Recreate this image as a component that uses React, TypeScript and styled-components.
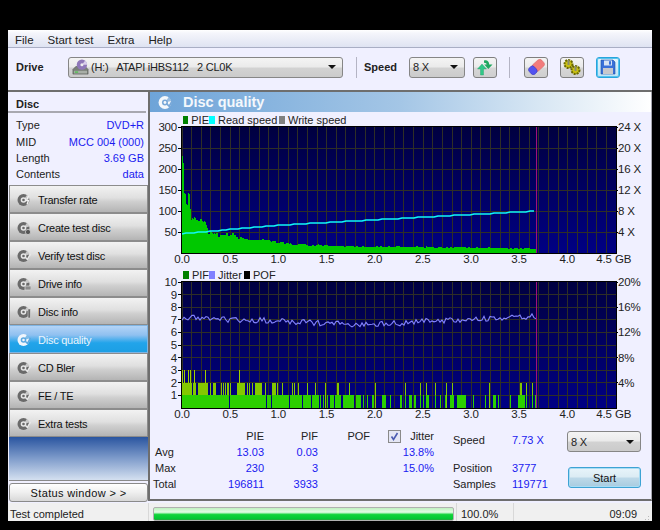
import React from "react";
import styled, { createGlobalStyle } from "styled-components";

const FONT = `"Liberation Sans", Arial, sans-serif`;
const PX_PER_GB = 96.3;
const PLOT_X = 32;
const PLOT_W = 434;
const PLOT_H = 126;
const END_COL = 354;

const GlobalStyle = createGlobalStyle`
  html, body {
    margin: 0;
    background: #000;
    font-family: ${FONT};
    font-size: 11px;
    color: #111;
  }
`;

// small deterministic noise so the charts are the same on every load
function makeRandom(seed: number) {
  let s = seed;
  return () => {
    s = (s * 16807) % 2147483647;
    return s / 2147483647;
  };
}

function interpolate(points: number[][], x: number) {
  for (let i = 1; i < points.length; i++) {
    if (x <= points[i][0]) {
      const [x0, y0] = points[i - 1];
      const [x1, y1] = points[i];
      return y0 + ((y1 - y0) * (x - x0)) / (x1 - x0);
    }
  }
  return points[points.length - 1][1];
}

const pieEnvelope = [
  [0, 230], [0.012, 212], [0.02, 143], [0.05, 135], [0.08, 128], [0.09, 88], [0.14, 75],
  [0.2, 80], [0.25, 65], [0.27, 50], [0.35, 44], [0.45, 44], [0.55, 46], [0.6, 36],
  [0.8, 32], [1.0, 26], [1.2, 21], [1.5, 18], [2.0, 16], [3.0, 13], [3.68, 11],
];
const speedCurve = [[0, 46], [1, 66], [2, 79], [3.68, 100]];
const jitterCurve = [
  [0, 7.2], [0.5, 7.0], [1.0, 6.95], [1.5, 6.7], [1.9, 6.6], [2.28, 6.75],
  [2.5, 6.9], [3.0, 7.0], [3.5, 7.2], [3.68, 7.3],
];

function buildPiePath() {
  const rnd = makeRandom(4242);
  let d = "";
  let factor = 1;
  for (let i = 0; i < END_COL; i++) {
    if (i % 2 === 0) factor = i < 3 ? 1 : 0.84 + rnd() * 0.24;
    const base = interpolate(pieEnvelope, i / PX_PER_GB);
    const h = Math.max(3, Math.round(base * factor * 0.42));
    d += `M${PLOT_X + i + 0.5} ${PLOT_H}V${PLOT_H - h}`;
  }
  return d;
}

function buildSpeedPoints() {
  const pts: string[] = [];
  for (let i = 0; i <= END_COL; i += 4) {
    const v = interpolate(speedCurve, i / PX_PER_GB);
    pts.push(`${PLOT_X + i},${Math.round(PLOT_H - v * 0.42)}`);
  }
  return pts.join(" ");
}

function buildJitterPoints() {
  const rnd = makeRandom(977);
  const pts: string[] = [];
  for (let i = 0; i <= END_COL; i += 2) {
    const v = interpolate(jitterCurve, i / PX_PER_GB) + (rnd() - 0.5) * 0.45;
    pts.push(`${PLOT_X + i},${(PLOT_H - v * 12.6).toFixed(1)}`);
  }
  return pts.join(" ");
}

// PIF columns as pixel spans measured off the trace: [from, to] in page x
const pifOne = [
  [182, 228], [230, 265], [267, 270], [272, 288], [290, 301], [303, 310], [312, 318], [320, 320],
  [323, 323], [327, 327], [330, 333], [335, 340], [343, 353], [356, 360], [363, 363], [367, 367],
  [372, 373], [382, 385], [390, 390], [400, 401], [405, 405], [409, 411], [414, 415], [420, 420],
  [423, 423], [426, 428], [435, 435], [440, 440], [445, 445], [450, 453], [457, 465], [473, 473],
  [485, 485], [493, 495], [498, 498], [510, 510], [518, 524], [526, 526], [532, 532], [535, 535],
];
const pifTwo = [
  [182, 191], [193, 195], [198, 207], [210, 210], [213, 215], [221, 221], [223, 223], [225, 225],
  [227, 228], [230, 230], [237, 244], [247, 247], [249, 249], [252, 252], [255, 261], [265, 265],
  [272, 275], [277, 277], [282, 282], [292, 292], [294, 294], [298, 298], [307, 307], [315, 315],
  [325, 325], [337, 338], [349, 349], [375, 375], [405, 405], [420, 420], [426, 426],
  [435, 435], [446, 446], [452, 452], [489, 489], [520, 521], [526, 526], [532, 532],
];
const pifThree = [182, 184, 188, 190, 194, 205, 239];

function spansToPath(spans: number[][], level: number) {
  return spans
    .map(([a, b]) => {
      const x = a - 150;
      const w = b - a + 1;
      return `M${x} ${PLOT_H}h${w}v${-level * 12.6}h${-w}z`;
    })
    .join("");
}

const piePath = buildPiePath();
const speedPoints = buildSpeedPoints();
const jitterPoints = buildJitterPoints();

const Window = styled.div`
  box-sizing: border-box;
  width: 644px;
  height: 491px;
  margin: 30px 0 0 8px;
  background: #f0f0ff;
  display: flex;
  flex-direction: column;
`;

const MenuBar = styled.div`
  box-sizing: border-box;
  height: 18px;
  flex: none;
  display: flex;
  align-items: center;
  padding: 2px 0 0 7px;
  gap: 14px;
  font-size: 11.5px;
  background: linear-gradient(#ffffff 0, #f4f5fb 20%, #dfe3f2 100%);
  border-bottom: 1px solid #a9aec4;
`;

const MenuItem = styled.span`
  color: #222;
`;

const ToolBar = styled.div`
  box-sizing: border-box;
  height: 44px;
  flex: none;
  display: flex;
  align-items: center;
  padding: 0 0 4px 8px;
  border-bottom: 2px solid #6e6e6e;
`;

const BoldLabel = styled.span<{ $width: number }>`
  font-weight: bold;
  width: ${(p) => p.$width}px;
  color: #222;
`;

const Combo = styled.div<{ $width: number }>`
  box-sizing: border-box;
  width: ${(p) => p.$width}px;
  height: 21px;
  display: flex;
  align-items: center;
  padding: 0 6px 0 3px;
  gap: 2px;
  border: 1px solid #868686;
  border-radius: 3px;
  background: linear-gradient(#f4f4f4 0, #ebebeb 45%, #d2d2d2 55%, #cbcbcb 100%);
  color: #222;
  white-space: pre;
`;

const ComboText = styled.span`
  flex: 1;
  letter-spacing: -0.25px;
`;

const Arrow = styled.span`
  width: 0;
  height: 0;
  border-left: 4px solid transparent;
  border-right: 4px solid transparent;
  border-top: 4px solid #111;
`;

const ToolSep = styled.div<{ $left: number; $right: number }>`
  width: 1px;
  height: 21px;
  background: #b4b4c4;
  margin: 0 ${(p) => p.$right}px 0 ${(p) => p.$left}px;
`;

const ToolButton = styled.button<{ $focus?: boolean; $left?: number; $gap?: number }>`
  box-sizing: border-box;
  width: 24px;
  height: 21px;
  padding: 0;
  margin: 0 ${(p) => p.$gap ?? 0}px 0 ${(p) => p.$left ?? 0}px;
  display: flex;
  align-items: center;
  justify-content: center;
  border: 1px solid ${(p) => (p.$focus ? "#27a4dc" : "#7f7f7f")};
  border-radius: 3px;
  background: ${(p) =>
    p.$focus
      ? "linear-gradient(#e6f5fc, #bfe4f6)"
      : "linear-gradient(#f4f4f4 0, #ebebeb 45%, #d6d6d6 55%, #cfcfcf 100%)"};
  box-shadow: ${(p) => (p.$focus ? "0 0 0 1px #55c4ee inset" : "none")};
`;

const Main = styled.div`
  flex: 1;
  display: flex;
  min-height: 0;
`;

const LeftColumn = styled.div`
  width: 140px;
  flex: none;
  display: flex;
  flex-direction: column;
`;

const DiscHeader = styled.div`
  box-sizing: border-box;
  height: 21px;
  padding: 6px 0 0 8px;
  font-weight: bold;
  color: #222;
  border-bottom: 2px solid #a8a8b0;
  margin-right: 2px;
`;

const DiscInfo = styled.div`
  box-sizing: border-box;
  height: 72px;
  padding: 4px 4px 0 8px;
  display: grid;
  grid-template-columns: auto 1fr;
  grid-auto-rows: 16.4px;
  align-items: center;
`;

const InfoLabel = styled.span`
  color: #222;
`;

const InfoValue = styled.span`
  text-align: right;
  color: #1a1af0;
`;

const NavList = styled.div`
  display: flex;
  flex-direction: column;
  padding-left: 1px;
`;

const NavButton = styled.div<{ $active?: boolean }>`
  box-sizing: border-box;
  height: 28px;
  display: flex;
  align-items: center;
  padding: 1px 0 0 7px;
  gap: 7px;
  letter-spacing: -0.25px;
  border: 1px solid ${(p) => (p.$active ? "#7fb4e2" : "#8c8c8c")};
  color: ${(p) => (p.$active ? "#eaf4fc" : "#111")};
  background: ${(p) =>
    p.$active
      ? "linear-gradient(#b4d4f6 0, #8fc0f0 35%, #22a4ea 65%, #1c9fe4 100%)"
      : "linear-gradient(#f2f2f2 0, #e0e0e0 45%, #cfcfcf 60%, #b4b4b4 100%)"};
`;

const Filler = styled.div`
  flex: 1;
  margin-left: 1px;
  background: linear-gradient(#2a55a0 0, #7f9ccb 50%, #d4e0f0 100%);
  border-bottom: 1px solid #8a8a8a;
`;

const StatusButton = styled.div`
  box-sizing: border-box;
  height: 19px;
  margin: 2px 0 1px 1px;
  display: flex;
  align-items: center;
  justify-content: center;
  border: 1px solid #8a8a8a;
  border-radius: 3px;
  letter-spacing: 0.35px;
  background: linear-gradient(#ffffff 0, #efefef 50%, #d8d8d8 100%);
`;

const Panel = styled.div`
  box-sizing: border-box;
  width: 504px;
  height: 409px;
  flex: none;
  display: flex;
  flex-direction: column;
  border-left: 2px solid #6e6e6e;
  border-right: 1px solid #a8a8b0;
  border-bottom: 2px solid #6e6e6e;
`;

const TitleBar = styled.div`
  height: 20px;
  flex: none;
  display: flex;
  align-items: center;
  padding-left: 8px;
  gap: 10px;
  color: #f4f8fc;
  font-size: 14.5px;
  font-weight: bold;
  background: linear-gradient(90deg, #6ea4d8 0, #a4c6e6 50%, #d8e7f4 78%, #ffffff 100%);
`;

const Legend = styled.div<{ $height: number }>`
  height: ${(p) => p.$height}px;
  flex: none;
  display: flex;
  align-items: center;
  padding: 1px 0 0 33px;
  box-sizing: border-box;
  color: #222;
`;

const LegendItem = styled.span<{ $color: string; $width: number }>`
  display: flex;
  align-items: center;
  width: ${(p) => p.$width}px;
  white-space: nowrap;
  &::before {
    content: "";
    width: 6px;
    height: 8px;
    margin-right: 3px;
    background: ${(p) => p.$color};
  }
`;

const ChartSvg = styled.svg`
  display: block;
  flex: none;
  overflow: visible;
  text {
    font-family: ${FONT};
    font-size: 11.5px;
    letter-spacing: -0.2px;
    fill: #222;
  }
`;

const StatsRow = styled.div`
  flex: 1;
  display: flex;
  padding-top: 6px;
`;

const StatsTable = styled.div`
  display: grid;
  margin-left: 3px;
  grid-template-columns: 40px 71px 54px 52px 64px;
  grid-auto-rows: 16px;
  align-items: center;
  width: 300px;
  flex: none;
`;

const StatHead = styled.span`
  text-align: right;
  color: #222;
`;

const StatLabel = styled.span<{ $indent?: number }>`
  padding-left: ${(p) => p.$indent ?? 2}px;
  color: #222;
`;

const StatValue = styled.span`
  text-align: right;
  color: #1a1af0;
`;

const JitterHead = styled.span`
  display: flex;
  justify-content: space-between;
  align-items: center;
  padding-left: 18px;
  color: #222;
`;

const CheckBox = styled.span`
  box-sizing: border-box;
  width: 13px;
  height: 13px;
  display: flex;
  align-items: center;
  justify-content: center;
  border: 1px solid #8a8a8a;
  background: #e4e6f4;
`;

const ReadoutColumn = styled.div`
  width: 114px;
  flex: none;
  display: grid;
  grid-template-columns: 59px 1fr;
  grid-template-rows: 4px 16px 12px 16px 16px;
  align-items: center;
`;

const Slot = styled.span<{ $row: number; $blue?: boolean }>`
  grid-row: ${(p) => p.$row};
  color: ${(p) => (p.$blue ? "#1a1af0" : "#222")};
  white-space: nowrap;
`;

const ControlColumn = styled.div`
  flex: none;
  width: 74px;
  display: flex;
  flex-direction: column;
  align-items: flex-start;
  gap: 15px;
  padding-top: 3px;
`;

const StartButton = styled.div`
  box-sizing: border-box;
  width: 73px;
  height: 21px;
  margin-left: 1px;
  display: flex;
  align-items: center;
  justify-content: center;
  border: 1px solid #3da3d4;
  border-radius: 3px;
  box-shadow: 0 0 0 1px #a8dcf4 inset;
  background: linear-gradient(#e8f4fa 0, #dcecf4 45%, #bcd8e8 55%, #a8cce0 100%);
`;

const StatusBar = styled.div`
  flex: none;
  height: 18px;
  display: flex;
  align-items: center;
  background: #f0f0f0;
  color: #222;
`;

const StatusCell = styled.div<{ $width: number; $pad?: number }>`
  box-sizing: border-box;
  width: ${(p) => p.$width}px;
  height: 100%;
  display: flex;
  align-items: center;
  padding: 3px 0 0 ${(p) => p.$pad ?? 2}px;
  border-right: 1px solid #d8d8d8;
`;

const ProgressTrack = styled.div`
  box-sizing: border-box;
  flex: 1;
  height: 14px;
  margin: 0 2px;
  border: 1px solid #b0b0b0;
  border-radius: 2px;
  background: linear-gradient(#bff0c0 0, #e4fde4 35%, #12d43a 55%, #02c832 90%, #30a040 100%);
`;

const StatusTime = styled.div`
  flex: 1;
  padding: 3px 15px 0 0;
  text-align: right;
  position: relative;
`;

const Grip = styled.svg`
  position: absolute;
  right: 2px;
  bottom: -4px;
`;

type ChartProps = {
  left: { label: string; y: number }[];
  right: { label: string; y: number }[];
  rows: number;
  id: string;
  children: React.ReactNode;
};

const xLabels = ["0.0", "0.5", "1.0", "1.5", "2.0", "2.5", "3.0", "3.5", "4.0"];

function Chart({ left, right, rows, id, children }: ChartProps) {
  const verticals = Array.from({ length: 45 }, (_, i) => PLOT_X + (i * PLOT_W) / 45);
  const horizontals = Array.from({ length: rows - 1 }, (_, i) => ((i + 1) * PLOT_H) / rows);
  return (
    <ChartSvg width={501} height={140} viewBox="0 0 501 140">
      <defs>
        <linearGradient id={id} x1="0" y1="0" x2="0" y2="1">
          <stop offset="0" stopColor="#000040" />
          <stop offset="1" stopColor="#000084" />
        </linearGradient>
      </defs>
      <rect x={PLOT_X} y={0} width={PLOT_W} height={PLOT_H} fill={`url(#${id})`} />
      <g stroke="#2e2e26" strokeWidth={1} shapeRendering="crispEdges">
        {verticals.map((x) => (
          <line key={x} x1={x} y1={0} x2={x} y2={PLOT_H} />
        ))}
        {horizontals.map((y) => (
          <line key={y} x1={PLOT_X} y1={y} x2={PLOT_X + PLOT_W} y2={y} />
        ))}
      </g>
      {children}
      <line x1={386.5} y1={0} x2={386.5} y2={PLOT_H} stroke="#a0107c" strokeWidth={1} shapeRendering="crispEdges" />
      <g stroke="#000" strokeWidth={1} shapeRendering="crispEdges">
        <line x1={PLOT_X - 0.5} y1={-1} x2={PLOT_X - 0.5} y2={PLOT_H + 1} />
        <line x1={PLOT_X} y1={-0.5} x2={PLOT_X + PLOT_W + 1} y2={-0.5} />
        <line x1={PLOT_X} y1={PLOT_H + 0.5} x2={PLOT_X + PLOT_W + 1} y2={PLOT_H + 0.5} />
        <line x1={PLOT_X + PLOT_W + 0.5} y1={-1} x2={PLOT_X + PLOT_W + 0.5} y2={PLOT_H + 1} />
        {left.map((l) => (
          <line key={l.label} x1={PLOT_X - 4} y1={l.y} x2={PLOT_X} y2={l.y} />
        ))}
        {right.map((l) => (
          <line key={l.label} x1={PLOT_X + PLOT_W} y1={l.y} x2={PLOT_X + PLOT_W + 2} y2={l.y} />
        ))}
      </g>
      {left.map((l) => (
        <text key={l.label} x={PLOT_X - 5} y={l.y + 4} textAnchor="end">
          {l.label}
        </text>
      ))}
      {right.map((l) => (
        <text key={l.label} x={PLOT_X + PLOT_W + 2} y={l.y + 4}>
          {l.label}
        </text>
      ))}
      {xLabels.map((l, i) => (
        <text key={l} x={PLOT_X + i * PX_PER_GB * 0.5} y={PLOT_H + 10} textAnchor="middle">
          {l}
        </text>
      ))}
      <text x={454} y={PLOT_H + 10} textAnchor="middle">
        4.5
      </text>
      <text x={465} y={PLOT_H + 10}>
        GB
      </text>
    </ChartSvg>
  );
}

type DiscIconProps = { badge?: string; color?: string; ring?: string; size?: number };

function DiscIcon({ badge, color = "#6a6a6a", ring = "#e8e8e8", size = 14 }: DiscIconProps) {
  return (
    <svg width={size} height={size} viewBox="0 0 14 14" style={{ flex: "none" }}>
      <circle cx="6.5" cy="7" r="6" fill={color} />
      <path d="M6.5 7 L10 1.8 A6 6 0 0 1 12.4 5.5 Z" fill={ring} opacity="0.75" />
      <circle cx="6.5" cy="7" r="2.8" fill={ring} />
      <circle cx="6.5" cy="7" r="1.3" fill={color} />
      {badge === "bolt" && <path d="M11.5 3 L9.5 7.5 H11.5 L10 11.5" fill="none" stroke="#f0f0f0" strokeWidth="1.4" />}
      {badge === "drop" && <circle cx="11" cy="11" r="2.6" fill="#555" stroke="#ddd" strokeWidth="0.7" />}
      {badge === "check" && <path d="M8 8 L10.5 10.5 L13.5 5" fill="none" stroke={ring} strokeWidth="1.6" />}
      {badge === "bar" && <rect x="8" y="9" width="6" height="4" fill="#8a8a8a" stroke="#ddd" strokeWidth="0.7" />}
      {badge === "info" && <rect x="11" y="4" width="2.4" height="9" fill="#6a6a6a" stroke="#e4e4e4" strokeWidth="0.5" />}
    </svg>
  );
}

function DriveIcon() {
  return (
    <svg width="17" height="17" viewBox="0 0 18 18" style={{ flex: "none" }}>
      <path d="M1 11 L4 8 H14 L17 11 V16 H1 Z" fill="#7a8078" stroke="#4e524e" strokeWidth="0.6" />
      <rect x="2" y="12.5" width="14" height="2.8" fill="#a8aea6" />
      <rect x="3" y="13.2" width="3.5" height="1.3" fill="#48c048" />
      <circle cx="10.5" cy="6" r="5.5" fill="#8f78b8" />
      <path d="M10.5 6 L14 1.6 A5.5 5.5 0 0 1 16 6 Z" fill="#d8cdea" />
      <circle cx="10.5" cy="6" r="1.6" fill="#eee" />
    </svg>
  );
}

function RefreshIcon() {
  return (
    <svg width="18" height="17" viewBox="0 0 18 17">
      <path d="M4.5 16 V10 H1.5 L6 5 L10.5 10 H7.5 V16 Z" fill="#30c888" stroke="#24a068" strokeWidth="0.4" />
      <path d="M8 1.5 C11 0.5 13.2 2.5 13.2 5.5 H16.5 L12.3 10 L8.2 5.5 H10.6 C10.6 4.5 10 3.8 8 3.8 Z" fill="#20a860" />
    </svg>
  );
}

function EraserIcon() {
  return (
    <svg width="17" height="16" viewBox="0 0 18 17">
      <g transform="rotate(-42 9 8.5)">
        <rect x="5" y="4" width="13" height="9" rx="3" fill="#f27c7c" stroke="#d86060" strokeWidth="0.5" />
        <rect x="0" y="4" width="7.5" height="9" rx="3" fill="#5252f0" stroke="#3030b8" strokeWidth="0.5" />
      </g>
    </svg>
  );
}

function GearsIcon() {
  return (
    <svg width="20" height="18" viewBox="0 0 20 18">
      <circle cx="6.5" cy="6" r="4" fill="#c8c010" stroke="#6a6800" strokeWidth="2" strokeDasharray="2 1" />
      <circle cx="13.5" cy="12" r="4" fill="#c8c010" stroke="#6a6800" strokeWidth="2" strokeDasharray="2 1" />
      <rect x="5.5" y="2" width="2" height="5" fill="#8a8a70" />
      <rect x="12.5" y="8" width="2" height="5" fill="#8a8a70" />
    </svg>
  );
}

function SaveIcon() {
  return (
    <svg width="16" height="16" viewBox="0 0 16 16">
      <path d="M1 1 H13 L15 3 V15 H1 Z" fill="#3a70d8" stroke="#2050a8" strokeWidth="0.6" />
      <rect x="4" y="1.5" width="8" height="5" fill="#d8e4f4" />
      <rect x="9" y="2.2" width="2" height="3.4" fill="#3a70d8" />
      <rect x="3" y="9" width="10" height="6" fill="#c8c8cc" />
    </svg>
  );
}

const navItems = [
  { label: "Transfer rate", badge: "bolt" },
  { label: "Create test disc", badge: "drop" },
  { label: "Verify test disc", badge: "check" },
  { label: "Drive info", badge: "bar" },
  { label: "Disc info", badge: "info" },
  { label: "Disc quality", badge: "check", active: true },
  { label: "CD Bler", badge: "check" },
  { label: "FE / TE", badge: "check" },
  { label: "Extra tests", badge: "check" },
];

const pieLeft = ["300", "250", "200", "150", "100", "50"].map((label, i) => ({ label, y: i * 21 }));
const pieRight = ["24 X", "20 X", "16 X", "12 X", "8 X", "4 X"].map((label, i) => ({ label, y: i * 21 }));
const pifLeft = ["10", "9", "8", "7", "6", "5", "4", "3", "2", "1"].map((label, i) => ({ label, y: i * 12.6 }));
const pifRight = ["20%", "16%", "12%", "8%", "4%"].map((label, i) => ({ label, y: i * 25.2 }));

export default function App() {
  return (
    <>
      <GlobalStyle />
      <Window>
        <MenuBar>
          <MenuItem>File</MenuItem>
          <MenuItem>Start test</MenuItem>
          <MenuItem>Extra</MenuItem>
          <MenuItem>Help</MenuItem>
        </MenuBar>
        <ToolBar>
          <BoldLabel $width={52}>Drive</BoldLabel>
          <Combo $width={275}>
            <DriveIcon />
            <ComboText>(H:)   ATAPI iHBS112   2 CL0K</ComboText>
            <Arrow />
          </Combo>
          <ToolSep $left={13} $right={7} />
          <BoldLabel $width={45}>Speed</BoldLabel>
          <Combo $width={56}>
            <ComboText>8 X</ComboText>
            <Arrow />
          </Combo>
          <ToolButton $left={8} $gap={12}>
            <RefreshIcon />
          </ToolButton>
          <ToolSep $left={0} $right={14} />
          <ToolButton $gap={12}>
            <EraserIcon />
          </ToolButton>
          <ToolButton $gap={12}>
            <GearsIcon />
          </ToolButton>
          <ToolButton $focus>
            <SaveIcon />
          </ToolButton>
        </ToolBar>
        <Main>
          <LeftColumn>
            <DiscHeader>Disc</DiscHeader>
            <DiscInfo>
              <InfoLabel>Type</InfoLabel>
              <InfoValue>DVD+R</InfoValue>
              <InfoLabel>MID</InfoLabel>
              <InfoValue>MCC 004 (000)</InfoValue>
              <InfoLabel>Length</InfoLabel>
              <InfoValue>3.69 GB</InfoValue>
              <InfoLabel>Contents</InfoLabel>
              <InfoValue>data</InfoValue>
            </DiscInfo>
            <NavList>
              {navItems.map((item) => (
                <NavButton key={item.label} $active={item.active}>
                  <DiscIcon
                    badge={item.badge}
                    color={item.active ? "#f0f6fc" : "#6a6a6a"}
                    ring={item.active ? "#5aa8e0" : "#e8e8e8"}
                  />
                  {item.label}
                </NavButton>
              ))}
            </NavList>
            <Filler />
            <StatusButton>Status window &gt; &gt;</StatusButton>
          </LeftColumn>
          <Panel>
            <TitleBar>
              <DiscIcon badge="check" color="#f4f8fc" ring="#78a8d8" size={15} />
              Disc quality
            </TitleBar>
            <Legend $height={15}>
              <LegendItem $color="#008000" $width={26}>PIE</LegendItem>
              <LegendItem $color="#00ffff" $width={70}>Read speed</LegendItem>
              <LegendItem $color="#808080" $width={70}>Write speed</LegendItem>
            </Legend>
            <Chart id="pieBg" rows={6} left={pieLeft} right={pieRight}>
              <path d={piePath} stroke="#00c800" strokeWidth={1} fill="none" shapeRendering="crispEdges" />
              <polyline points={speedPoints} fill="none" stroke="#10f8f8" strokeWidth={1.5} />
            </Chart>
            <Legend $height={15}>
              <LegendItem $color="#008000" $width={26}>PIF</LegendItem>
              <LegendItem $color="#8080ff" $width={35}>Jitter</LegendItem>
              <LegendItem $color="#000000" $width={40}>POF</LegendItem>
            </Legend>
            <Chart id="pifBg" rows={10} left={pifLeft} right={pifRight}>
              <g shapeRendering="crispEdges">
                <path d={spansToPath(pifTwo, 2)} fill="#84c800" />
                <path d={spansToPath(pifOne, 1)} fill="#2cd000" />
                {pifThree.map((x) => (
                  <rect key={x} x={x - 150} y={PLOT_H - 37.8} width={1} height={12.6} fill="#a0d000" />
                ))}
              </g>
              <polyline points={jitterPoints} fill="none" stroke="#8484ff" strokeWidth={1.1} />
            </Chart>
            <StatsRow>
              <StatsTable>
                <span />
                <StatHead>PIE</StatHead>
                <StatHead>PIF</StatHead>
                <StatHead>POF</StatHead>
                <JitterHead>
                  <CheckBox>
                    <svg width="9" height="9" viewBox="0 0 9 9">
                      <path d="M1.5 4.5 L3.5 7.5 L7.5 1" fill="none" stroke="#4a5ab0" strokeWidth="1.6" />
                    </svg>
                  </CheckBox>
                  Jitter
                </JitterHead>
                <StatLabel>Avg</StatLabel>
                <StatValue>13.03</StatValue>
                <StatValue>0.03</StatValue>
                <span />
                <StatValue>13.8%</StatValue>
                <StatLabel>Max</StatLabel>
                <StatValue>230</StatValue>
                <StatValue>3</StatValue>
                <span />
                <StatValue>15.0%</StatValue>
                <StatLabel $indent={0}>Total</StatLabel>
                <StatValue>196811</StatValue>
                <StatValue>3933</StatValue>
              </StatsTable>
              <ReadoutColumn>
                <Slot $row={2}>Speed</Slot>
                <Slot $row={2} $blue>7.73 X</Slot>
                <Slot $row={4}>Position</Slot>
                <Slot $row={4} $blue>3777</Slot>
                <Slot $row={5}>Samples</Slot>
                <Slot $row={5} $blue>119771</Slot>
              </ReadoutColumn>
              <ControlColumn>
                <Combo $width={74}>
                  <ComboText>8 X</ComboText>
                  <Arrow />
                </Combo>
                <StartButton>Start</StartButton>
              </ControlColumn>
            </StatsRow>
          </Panel>
        </Main>
        <StatusBar>
          <StatusCell $width={141}>Test completed</StatusCell>
          <StatusCell $width={308} $pad={2}>
            <ProgressTrack />
          </StatusCell>
          <StatusCell $width={57} $pad={4}>100.0%</StatusCell>
          <StatusTime>
            09:09
            <Grip width="10" height="10" viewBox="0 0 10 10">
              <path d="M8 2h1v1H8zM5 5h1v1H5zM8 5h1v1H8zM2 8h1v1H2zM5 8h1v1H5zM8 8h1v1H8z" fill="#b8b8b8" />
            </Grip>
          </StatusTime>
        </StatusBar>
      </Window>
    </>
  );
}
